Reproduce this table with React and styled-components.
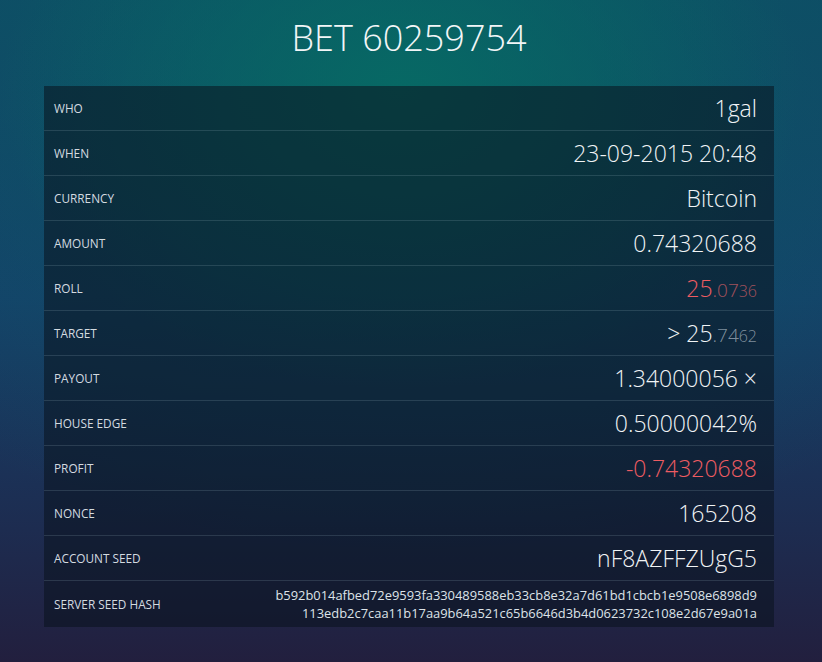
import React from "react";
import styled, { createGlobalStyle } from "styled-components";

const GlobalStyle = createGlobalStyle`
  html, body {
    margin: 0;
    padding: 0;
    height: 100%;
  }
  body {
    font-family: "Open Sans", "Liberation Sans", sans-serif;
    background: #1a2440;
  }
`;

const Page = styled.div`
  box-sizing: border-box;
  width: 822px;
  height: 662px;
  padding-right: 4px;
  overflow: hidden;
  background:
    radial-gradient(ellipse 400px 300px at 400px 90px, rgba(6, 108, 100, 0.85), rgba(6, 108, 100, 0) 100%),
    radial-gradient(ellipse 700px 500px at 410px 60px, rgba(10, 88, 100, 0.8), rgba(10, 88, 100, 0) 100%),
    linear-gradient(180deg, #0f4a66 0%, #15416a 45%, #1d2c50 80%, #221f3e 100%);
  display: flex;
  flex-direction: column;
  align-items: center;
`;

const Title = styled.h1`
  margin: 15px 0 0;
  height: 71px;
  font-weight: 300;
  font-size: 36px;
  line-height: 46px;
  color: #f2f6f7;
`;

const Table = styled.div`
  width: 730px;
  background: rgba(10, 18, 30, 0.55);
  display: flex;
  flex-direction: column;
`;

const Row = styled.div`
  display: flex;
  align-items: center;
  justify-content: space-between;
  height: ${(p) => (p.$tall ? 46 : 44)}px;
  padding: 0 17px 0 10px;
  border-top: ${(p) => (p.$first ? "none" : "1px solid rgba(160, 190, 200, 0.18)")};
`;

const Label = styled.span`
  font-size: 11.8px;
  font-weight: 400;
  color: #d4dbe0;
  text-transform: uppercase;
`;

const Value = styled.span`
  font-size: 23px;
  font-weight: 300;
  color: ${(p) => (p.$red ? "#ee5c62" : "#f1f4f6")};
  white-space: nowrap;
`;

const Part = styled.span`
  font-size: ${(p) => p.$size}px;
  color: ${(p) => p.$color};
`;

const Hash = styled.span`
  font-size: 12.9px;
  font-weight: 400;
  line-height: 18px;
  color: #dde3e8;
  text-align: right;
`;

function Split({ whole, dec, tail, red }) {
  const main = red ? "#ee5c62" : "#f1f4f6";
  const dim = red ? "rgba(230, 100, 106, 0.7)" : "rgba(200, 210, 220, 0.62)";
  return (
    <>
      <Part $size={23} $color={main}>{whole}</Part>
      <Part $size={19} $color={dim}>{dec}</Part>
      <Part $size={16} $color={dim}>{tail}</Part>
    </>
  );
}

const rows = [
  ["Who", <Value>1gal</Value>],
  ["When", <Value>23-09-2015 20:48</Value>],
  ["Currency", <Value>Bitcoin</Value>],
  ["Amount", <Value>0.74320688</Value>],
  ["Roll", <Value><Split whole="25" dec=".07" tail="36" red /></Value>],
  ["Target", <Value>&gt; <Split whole="25" dec=".74" tail="62" /></Value>],
  ["Payout", <Value>1.34000056 ×</Value>],
  ["House edge", <Value>0.50000042%</Value>],
  ["Profit", <Value $red>-0.74320688</Value>],
  ["Nonce", <Value>165208</Value>],
  ["Account seed", <Value>nF8AZFFZUgG5</Value>],
];

export default function App() {
  return (
    <Page>
      <GlobalStyle />
      <Title>BET 60259754</Title>
      <Table>
        {rows.map(([label, value], i) => (
          <Row key={label} $first={i === 0}>
            <Label>{label}</Label>
            {value}
          </Row>
        ))}
        <Row $tall>
          <Label>Server seed hash</Label>
          <Hash>
            b592b014afbed72e9593fa330489588eb33cb8e32a7d61bd1cbcb1e9508e6898d9
            <br />
            113edb2c7caa11b17aa9b64a521c65b6646d3b4d0623732c108e2d67e9a01a
          </Hash>
        </Row>
      </Table>
    </Page>
  );
}
